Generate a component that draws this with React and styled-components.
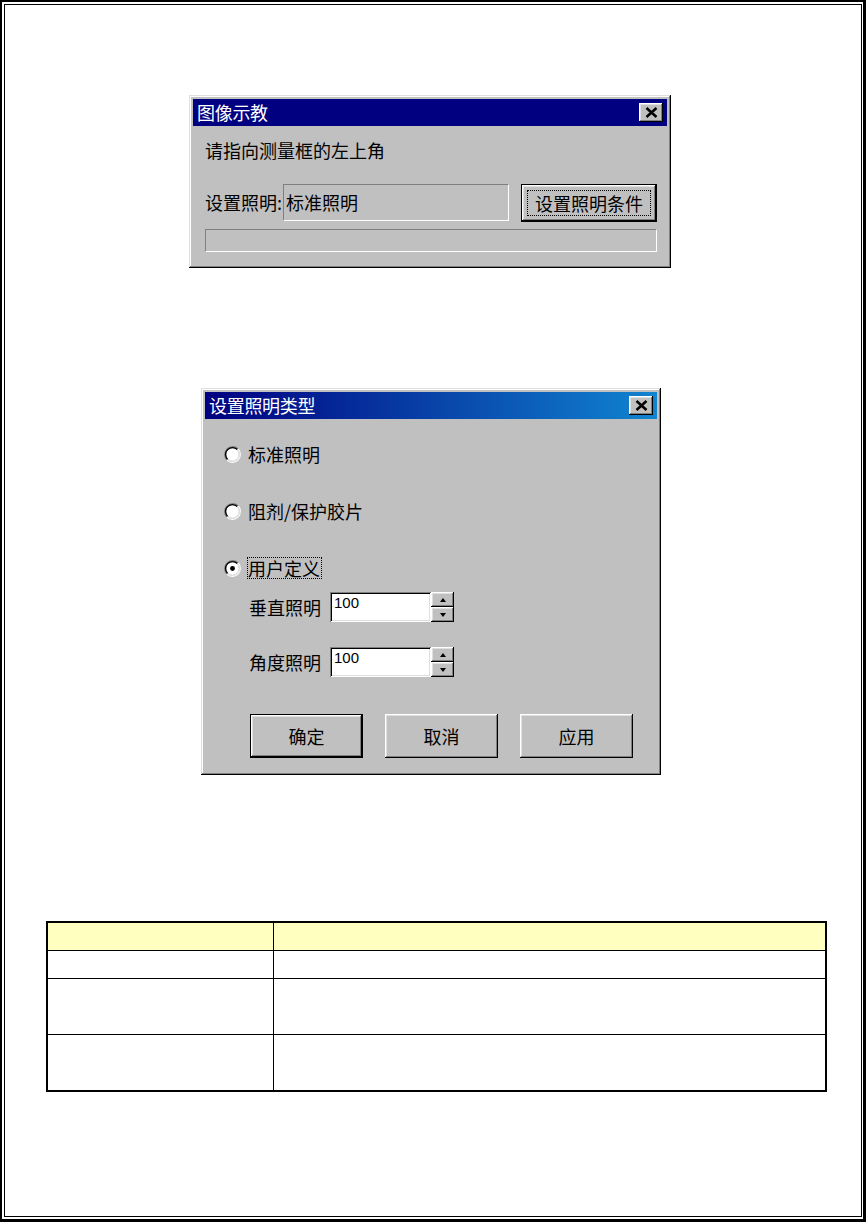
import React from 'react';
import styled, { createGlobalStyle } from 'styled-components';

const GlobalStyle = createGlobalStyle`
  html, body {
    margin: 0;
    padding: 0;
    background: #fff;
  }
  body {
    font-family: "Noto Sans CJK SC", "Liberation Sans", sans-serif;
    color: #000;
  }
`;

// win98 bevels
const raised = `
  inset -1px -1px #000,
  inset 1px 1px #dfdfdf,
  inset -2px -2px #808080,
  inset 2px 2px #fff
`;
const buttonBevel = `
  inset -1px -1px #000,
  inset 1px 1px #fff,
  inset -2px -2px #808080,
  inset 2px 2px #dfdfdf
`;

function Radio({ checked }) {
   return (
      <svg width="17" height="17" viewBox="0 0 16 16">
         <circle cx="8" cy="8" r="6" fill="#fff" />
         <path d="M2.7 13.3 A7.5 7.5 0 0 1 13.3 2.7" stroke="#808080" strokeWidth="1.2" fill="none" />
         <path d="M13.3 2.7 A7.5 7.5 0 0 1 2.7 13.3" stroke="#fff" strokeWidth="1.2" fill="none" />
         <path d="M3.4 12.6 A6.5 6.5 0 0 1 12.6 3.4" stroke="#000" strokeWidth="1.3" fill="none" />
         <path d="M12.6 3.4 A6.5 6.5 0 0 1 3.4 12.6" stroke="#dfdfdf" strokeWidth="1.3" fill="none" />
         {checked && <circle cx="8" cy="8" r="2.3" fill="#000" />}
      </svg>
   );
}

function CloseIcon() {
   return (
      <svg width="13" height="11" viewBox="0 0 13 11">
         <path d="M1.5 1 L11.5 10 M11.5 1 L1.5 10" stroke="#000" strokeWidth="2.5" fill="none" />
      </svg>
   );
}

function Arrow({ down }) {
   return (
      <svg width="6" height="4" viewBox="0 0 6 4">
         <polygon points={down ? '0,0 6,0 3,4' : '0,4 6,4 3,0'} fill="#000" />
      </svg>
   );
}

function TitleBar({ title, gradient }) {
   return (
      <Bar gradient={gradient}>
         <span>{title}</span>
         <CloseButton><CloseIcon /></CloseButton>
      </Bar>
   );
}

function SpinField({ label, value }) {
   return (
      <SpinRow>
         <FieldLabel>{label}</FieldLabel>
         <NumberBox>{value}</NumberBox>
         <Spinner>
            <SpinButton><Arrow /></SpinButton>
            <SpinButton><Arrow down /></SpinButton>
         </Spinner>
      </SpinRow>
   );
}

export default function App() {
   return (
      <>
         <GlobalStyle />
         <Page>
            <Inner>
               <Window width={482} left={184} top={90}>
                  <TitleBar title="图像示教" />
                  <TeachBody>
                     <Message>请指向测量框的左上角</Message>
                     <LightRow>
                        <Label>设置照明:</Label>
                        <StaticField>标准照明</StaticField>
                        <PushButton width={136} height={38} isDefault>
                           <Focus>设置照明条件</Focus>
                        </PushButton>
                     </LightRow>
                     <Progress />
                  </TeachBody>
               </Window>

               <Window width={460} left={196} top={120}>
                  <TitleBar title="设置照明类型" gradient />
                  <LightBody>
                     <RadioGroup>
                        <RadioRow>
                           <Radio />
                           <RadioText>标准照明</RadioText>
                        </RadioRow>
                        <RadioRow>
                           <Radio />
                           <RadioText>阻剂/保护胶片</RadioText>
                        </RadioRow>
                        <RadioRow>
                           <Radio checked />
                           <RadioText focused>用户定义</RadioText>
                        </RadioRow>
                     </RadioGroup>
                     <SpinList>
                        <SpinField label="垂直照明" value="100" />
                        <SpinField label="角度照明" value="100" />
                     </SpinList>
                     <ButtonRow>
                        <PushButton width={113} height={44} isDefault>确定</PushButton>
                        <PushButton width={113} height={44}>取消</PushButton>
                        <PushButton width={113} height={44}>应用</PushButton>
                     </ButtonRow>
                  </LightBody>
               </Window>

               <Table>
                  <tbody>
                     <tr>
                        <HeadCell first height={28}></HeadCell>
                        <HeadCell height={28}></HeadCell>
                     </tr>
                     <tr>
                        <Cell first height={28}></Cell>
                        <Cell height={28}></Cell>
                     </tr>
                     <tr>
                        <Cell first height={56}></Cell>
                        <Cell height={56}></Cell>
                     </tr>
                     <tr>
                        <Cell first last height={55}></Cell>
                        <Cell last height={55}></Cell>
                     </tr>
                  </tbody>
               </Table>
            </Inner>
         </Page>
      </>
   );
}

const Page = styled.div`
   box-sizing: border-box;
   width: 866px;
   height: 1222px;
   border-style: solid;
   border-color: #000;
   border-width: 2px 3px 3px 2px;
   padding: 2px 1px 2px 2px;
`;
const Inner = styled.div`
   box-sizing: border-box;
   height: 100%;
   border: 1px solid #000;
   display: flex;
   flex-direction: column;
   align-items: flex-start;
`;
const Window = styled.div`
   box-sizing: border-box;
   width: ${p => p.width}px;
   margin: ${p => p.top}px 0 0 ${p => p.left}px;
   padding: 4px;
   background: #c0c0c0;
   box-shadow: ${raised};
   display: flex;
   flex-direction: column;
`;
const Bar = styled.div`
   height: 27px;
   display: flex;
   align-items: center;
   justify-content: space-between;
   padding: 0 4px;
   background: ${p => p.gradient ? 'linear-gradient(90deg, #000080, #1084d0)' : '#000080'};
   color: #fff;
   font-size: 18px;
   line-height: 27px;
   letter-spacing: -0.3px;
`;
const CloseButton = styled.div`
   box-sizing: border-box;
   width: 24px;
   height: 19px;
   background: #c0c0c0;
   box-shadow: ${buttonBevel};
   display: flex;
   align-items: center;
   justify-content: center;
   padding-bottom: 1px;
`;
const TeachBody = styled.div`
   display: flex;
   flex-direction: column;
   padding: 12px 10px 12px 12px;
   font-size: 18px;
`;
const Message = styled.div`
   height: 24px;
   line-height: 24px;
`;
const LightRow = styled.div`
   display: flex;
   align-items: flex-start;
   margin-top: 22px;
`;
const Label = styled.div`
   width: 78px;
   height: 37px;
   line-height: 37px;
   white-space: nowrap;
`;
const StaticField = styled.div`
   box-sizing: border-box;
   width: 226px;
   height: 37px;
   line-height: 35px;
   padding-left: 2px;
   border: 1px solid;
   border-color: #808080 #fff #fff #808080;
   margin-right: 12px;
`;
const PushButton = styled.div`
   box-sizing: border-box;
   width: ${p => p.width}px;
   height: ${p => p.height}px;
   display: flex;
   align-items: center;
   justify-content: center;
   background: #c0c0c0;
   font-size: 18px;
   border: ${p => p.isDefault ? '1px solid #000' : 'none'};
   box-shadow: ${buttonBevel};
`;
const Focus = styled.span`
   align-self: stretch;
   flex: 1;
   margin: 5px;
   border: 1px dotted #000;
   display: flex;
   align-items: center;
   justify-content: center;
`;
const Progress = styled.div`
   box-sizing: border-box;
   height: 23px;
   margin-top: 7px;
   border: 1px solid;
   border-color: #808080 #fff #fff #808080;
`;
const LightBody = styled.div`
   display: flex;
   flex-direction: column;
   padding: 23px 10px 13px 19px;
   font-size: 18px;
`;
const RadioGroup = styled.div`
   display: flex;
   flex-direction: column;
   gap: 33px;
`;
const RadioRow = styled.div`
   height: 24px;
   display: flex;
   align-items: center;
   gap: 6px;
`;
const RadioText = styled.span`
   box-sizing: border-box;
   height: 22px;
   line-height: 20px;
   padding: 0 1px 0 0;
   border: 1px dotted ${p => p.focused ? '#000' : 'transparent'};
`;
const SpinList = styled.div`
   display: flex;
   flex-direction: column;
   gap: 25px;
   margin: 12px 0 0 25px;
`;
const SpinRow = styled.div`
   display: flex;
   align-items: center;
`;
const FieldLabel = styled.span`
   width: 81px;
   line-height: 30px;
`;
const NumberBox = styled.div`
   box-sizing: border-box;
   width: 101px;
   height: 30px;
   padding: 2px 4px;
   background: #fff;
   font-family: "Liberation Sans", Arial, sans-serif;
   font-size: 15px;
   line-height: 17px;
   box-shadow: inset 1px 1px #808080, inset -1px -1px #fff, inset 2px 2px #000, inset -2px -2px #dfdfdf;
`;
const Spinner = styled.div`
   display: flex;
   flex-direction: column;
`;
const SpinButton = styled.div`
   box-sizing: border-box;
   width: 23px;
   height: 15px;
   background: #c0c0c0;
   box-shadow: ${buttonBevel};
   display: flex;
   align-items: center;
   justify-content: center;
`;
const ButtonRow = styled.div`
   display: flex;
   gap: 22px;
   margin: 37px 0 0 26px;
`;
const Table = styled.table`
   width: 781px;
   margin: 146px 0 0 41px;
   border: 2px solid #000;
   border-spacing: 0;
   border-collapse: separate;
   table-layout: fixed;
`;
const Cell = styled.td`
   box-sizing: border-box;
   height: ${p => p.height}px;
   width: ${p => p.first ? '226px' : 'auto'};
   padding: 0;
   border-right: ${p => p.first ? '1px solid #000' : 'none'};
   border-bottom: ${p => p.last ? 'none' : '1px solid #000'};
   background: #fff;
`;
const HeadCell = styled(Cell)`
   background: #ffffc0;
`;
